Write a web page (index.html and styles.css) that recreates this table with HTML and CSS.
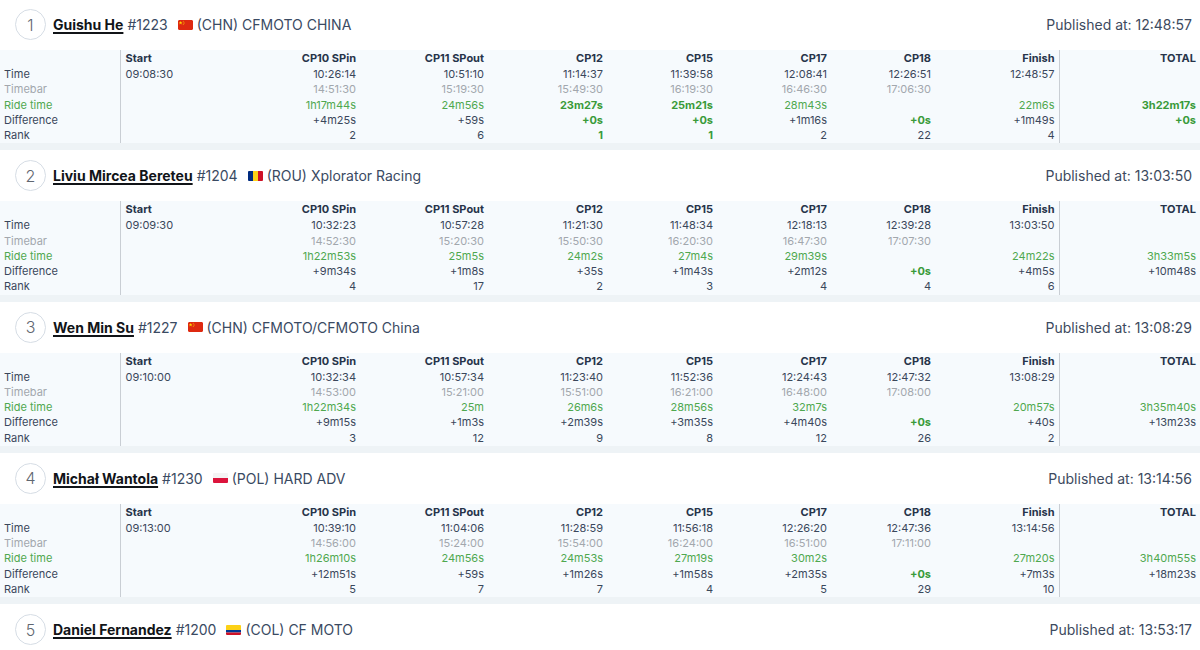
FILE: index.html
```html
<!DOCTYPE html>
<html>
<head>
<meta charset="utf-8">
<link rel="stylesheet" href="styles.css">
</head>
<body>
<div class="list">

<section class="card">
  <div class="card-head">
    <div class="pos">1</div>
    <div class="who">
      <a class="name" href="#">Guishu He</a>
      <span class="num">#1223</span>
      <svg class="flag" viewBox="0 0 15 10"><rect width="15" height="10" rx="1" fill="#de2910"/><polygon points="2.6,1 3.1,2.3 4.4,2.3 3.4,3.1 3.8,4.4 2.6,3.6 1.4,4.4 1.8,3.1 0.8,2.3 2.1,2.3" fill="#ffde00"/><circle cx="5.2" cy="1.2" r="0.45" fill="#ffde00"/><circle cx="6" cy="2.2" r="0.45" fill="#ffde00"/><circle cx="6" cy="3.5" r="0.45" fill="#ffde00"/><circle cx="5.2" cy="4.5" r="0.45" fill="#ffde00"/></svg>
      <span class="team">(CHN) CFMOTO CHINA</span>
    </div>
    <div class="pub">Published at: 12:48:57</div>
  </div>
  <table class="splits">
    <colgroup><col class="c-lab"><col class="c-start"><col class="c-10"><col class="c-11"><col class="c-12"><col class="c-15"><col class="c-17"><col class="c-18"><col class="c-fin"><col class="c-tot"></colgroup>
    <thead><tr><th></th><th class="start">Start</th><th>CP10 SPin</th><th>CP11 SPout</th><th>CP12</th><th>CP15</th><th>CP17</th><th>CP18</th><th>Finish</th><th class="tot">TOTAL</th></tr></thead>
    <tbody>
      <tr class="r-time"><td>Time</td><td class="start">09:08:30</td><td>10:26:14</td><td>10:51:10</td><td>11:14:37</td><td>11:39:58</td><td>12:08:41</td><td>12:26:51</td><td>12:48:57</td><td class="tot"></td></tr>
      <tr class="r-bar"><td>Timebar</td><td class="start"></td><td>14:51:30</td><td>15:19:30</td><td>15:49:30</td><td>16:19:30</td><td>16:46:30</td><td>17:06:30</td><td></td><td class="tot"></td></tr>
      <tr class="r-ride"><td>Ride time</td><td class="start"></td><td>1h17m44s</td><td>24m56s</td><td class="best">23m27s</td><td class="best">25m21s</td><td>28m43s</td><td></td><td>22m6s</td><td class="tot best">3h22m17s</td></tr>
      <tr class="r-diff"><td>Difference</td><td class="start"></td><td>+4m25s</td><td>+59s</td><td class="best">+0s</td><td class="best">+0s</td><td>+1m16s</td><td class="best">+0s</td><td>+1m49s</td><td class="tot best">+0s</td></tr>
      <tr class="r-rank"><td>Rank</td><td class="start"></td><td>2</td><td>6</td><td class="best">1</td><td class="best">1</td><td>2</td><td>22</td><td>4</td><td class="tot"></td></tr>
    </tbody>
  </table>
</section>

<section class="card">
  <div class="card-head">
    <div class="pos">2</div>
    <div class="who">
      <a class="name" href="#">Liviu Mircea Bereteu</a>
      <span class="num">#1204</span>
      <svg class="flag" viewBox="0 0 15 10"><rect width="5" height="10" fill="#002b7f"/><rect x="5" width="5" height="10" fill="#fcd116"/><rect x="10" width="5" height="10" fill="#ce1126"/></svg>
      <span class="team">(ROU) Xplorator Racing</span>
    </div>
    <div class="pub">Published at: 13:03:50</div>
  </div>
  <table class="splits">
    <colgroup><col class="c-lab"><col class="c-start"><col class="c-10"><col class="c-11"><col class="c-12"><col class="c-15"><col class="c-17"><col class="c-18"><col class="c-fin"><col class="c-tot"></colgroup>
    <thead><tr><th></th><th class="start">Start</th><th>CP10 SPin</th><th>CP11 SPout</th><th>CP12</th><th>CP15</th><th>CP17</th><th>CP18</th><th>Finish</th><th class="tot">TOTAL</th></tr></thead>
    <tbody>
      <tr class="r-time"><td>Time</td><td class="start">09:09:30</td><td>10:32:23</td><td>10:57:28</td><td>11:21:30</td><td>11:48:34</td><td>12:18:13</td><td>12:39:28</td><td>13:03:50</td><td class="tot"></td></tr>
      <tr class="r-bar"><td>Timebar</td><td class="start"></td><td>14:52:30</td><td>15:20:30</td><td>15:50:30</td><td>16:20:30</td><td>16:47:30</td><td>17:07:30</td><td></td><td class="tot"></td></tr>
      <tr class="r-ride"><td>Ride time</td><td class="start"></td><td>1h22m53s</td><td>25m5s</td><td>24m2s</td><td>27m4s</td><td>29m39s</td><td></td><td>24m22s</td><td class="tot">3h33m5s</td></tr>
      <tr class="r-diff"><td>Difference</td><td class="start"></td><td>+9m34s</td><td>+1m8s</td><td>+35s</td><td>+1m43s</td><td>+2m12s</td><td class="best">+0s</td><td>+4m5s</td><td class="tot">+10m48s</td></tr>
      <tr class="r-rank"><td>Rank</td><td class="start"></td><td>4</td><td>17</td><td>2</td><td>3</td><td>4</td><td>4</td><td>6</td><td class="tot"></td></tr>
    </tbody>
  </table>
</section>

<section class="card">
  <div class="card-head">
    <div class="pos">3</div>
    <div class="who">
      <a class="name" href="#">Wen Min Su</a>
      <span class="num">#1227</span>
      <svg class="flag" viewBox="0 0 15 10"><rect width="15" height="10" rx="1" fill="#de2910"/><polygon points="2.6,1 3.1,2.3 4.4,2.3 3.4,3.1 3.8,4.4 2.6,3.6 1.4,4.4 1.8,3.1 0.8,2.3 2.1,2.3" fill="#ffde00"/><circle cx="5.2" cy="1.2" r="0.45" fill="#ffde00"/><circle cx="6" cy="2.2" r="0.45" fill="#ffde00"/><circle cx="6" cy="3.5" r="0.45" fill="#ffde00"/><circle cx="5.2" cy="4.5" r="0.45" fill="#ffde00"/></svg>
      <span class="team">(CHN) CFMOTO/CFMOTO China</span>
    </div>
    <div class="pub">Published at: 13:08:29</div>
  </div>
  <table class="splits">
    <colgroup><col class="c-lab"><col class="c-start"><col class="c-10"><col class="c-11"><col class="c-12"><col class="c-15"><col class="c-17"><col class="c-18"><col class="c-fin"><col class="c-tot"></colgroup>
    <thead><tr><th></th><th class="start">Start</th><th>CP10 SPin</th><th>CP11 SPout</th><th>CP12</th><th>CP15</th><th>CP17</th><th>CP18</th><th>Finish</th><th class="tot">TOTAL</th></tr></thead>
    <tbody>
      <tr class="r-time"><td>Time</td><td class="start">09:10:00</td><td>10:32:34</td><td>10:57:34</td><td>11:23:40</td><td>11:52:36</td><td>12:24:43</td><td>12:47:32</td><td>13:08:29</td><td class="tot"></td></tr>
      <tr class="r-bar"><td>Timebar</td><td class="start"></td><td>14:53:00</td><td>15:21:00</td><td>15:51:00</td><td>16:21:00</td><td>16:48:00</td><td>17:08:00</td><td></td><td class="tot"></td></tr>
      <tr class="r-ride"><td>Ride time</td><td class="start"></td><td>1h22m34s</td><td>25m</td><td>26m6s</td><td>28m56s</td><td>32m7s</td><td></td><td>20m57s</td><td class="tot">3h35m40s</td></tr>
      <tr class="r-diff"><td>Difference</td><td class="start"></td><td>+9m15s</td><td>+1m3s</td><td>+2m39s</td><td>+3m35s</td><td>+4m40s</td><td class="best">+0s</td><td>+40s</td><td class="tot">+13m23s</td></tr>
      <tr class="r-rank"><td>Rank</td><td class="start"></td><td>3</td><td>12</td><td>9</td><td>8</td><td>12</td><td>26</td><td>2</td><td class="tot"></td></tr>
    </tbody>
  </table>
</section>

<section class="card">
  <div class="card-head">
    <div class="pos">4</div>
    <div class="who">
      <a class="name" href="#">Michał Wantola</a>
      <span class="num">#1230</span>
      <svg class="flag" viewBox="0 0 15 10"><rect width="15" height="5" fill="#f4f4f4"/><rect y="5" width="15" height="5" fill="#dc143c"/></svg>
      <span class="team">(POL) HARD ADV</span>
    </div>
    <div class="pub">Published at: 13:14:56</div>
  </div>
  <table class="splits">
    <colgroup><col class="c-lab"><col class="c-start"><col class="c-10"><col class="c-11"><col class="c-12"><col class="c-15"><col class="c-17"><col class="c-18"><col class="c-fin"><col class="c-tot"></colgroup>
    <thead><tr><th></th><th class="start">Start</th><th>CP10 SPin</th><th>CP11 SPout</th><th>CP12</th><th>CP15</th><th>CP17</th><th>CP18</th><th>Finish</th><th class="tot">TOTAL</th></tr></thead>
    <tbody>
      <tr class="r-time"><td>Time</td><td class="start">09:13:00</td><td>10:39:10</td><td>11:04:06</td><td>11:28:59</td><td>11:56:18</td><td>12:26:20</td><td>12:47:36</td><td>13:14:56</td><td class="tot"></td></tr>
      <tr class="r-bar"><td>Timebar</td><td class="start"></td><td>14:56:00</td><td>15:24:00</td><td>15:54:00</td><td>16:24:00</td><td>16:51:00</td><td>17:11:00</td><td></td><td class="tot"></td></tr>
      <tr class="r-ride"><td>Ride time</td><td class="start"></td><td>1h26m10s</td><td>24m56s</td><td>24m53s</td><td>27m19s</td><td>30m2s</td><td></td><td>27m20s</td><td class="tot">3h40m55s</td></tr>
      <tr class="r-diff"><td>Difference</td><td class="start"></td><td>+12m51s</td><td>+59s</td><td>+1m26s</td><td>+1m58s</td><td>+2m35s</td><td class="best">+0s</td><td>+7m3s</td><td class="tot">+18m23s</td></tr>
      <tr class="r-rank"><td>Rank</td><td class="start"></td><td>5</td><td>7</td><td>7</td><td>4</td><td>5</td><td>29</td><td>10</td><td class="tot"></td></tr>
    </tbody>
  </table>
</section>

<section class="card">
  <div class="card-head">
    <div class="pos">5</div>
    <div class="who">
      <a class="name" href="#">Daniel Fernandez</a>
      <span class="num">#1200</span>
      <svg class="flag" viewBox="0 0 15 10"><rect width="15" height="5" fill="#fcd116"/><rect y="5" width="15" height="2.5" fill="#003893"/><rect y="7.5" width="15" height="2.5" fill="#ce1126"/></svg>
      <span class="team">(COL) CF MOTO</span>
    </div>
    <div class="pub">Published at: 13:53:17</div>
  </div>
</section>

</div>
</body>
</html>
```

FILE: styles.css
```css
* { box-sizing: border-box; }

body {
  margin: 0;
  background: #ffffff;
  font-family: Inter, "Open Sans", "Liberation Sans", sans-serif;
  color: #3a475b;
}

.list {
  margin-top: -1px;
}

.card {
  border-bottom: 7px solid #eef3f6;
}

.card-head {
  height: 51px;
  display: flex;
  align-items: center;
  padding: 0 8px 0 15px;
}

.pos {
  width: 31px;
  height: 31px;
  border: 1px solid #d6dde5;
  border-radius: 50%;
  display: flex;
  align-items: center;
  justify-content: center;
  font-size: 16px;
  font-weight: 300;
  color: #5f6670;
  flex: none;
}

.who {
  flex: 1;
  display: flex;
  align-items: center;
  margin-left: 7px;
  font-size: 14px;
  color: #3a4a62;
}

.name {
  color: #111418;
  font-weight: 700;
  text-decoration: underline;
  text-decoration-thickness: 1.5px;
  text-underline-offset: 2px;
}

.num {
  margin-left: 4px;
}

.flag {
  width: 15px;
  height: 10px;
  margin-left: 10px;
  margin-right: 4px;
  border-radius: 1px;
}

.pub {
  font-size: 14px;
  color: #3d4a5e;
}

.splits {
  width: 1200px;
  table-layout: fixed;
  border-collapse: collapse;
  background: #f6fafd;
  font-size: 11px;
  color: #3a475b;
}

.c-lab { width: 120px; }
.c-start { width: 120px; }
.c-10 { width: 120px; }
.c-11 { width: 128px; }
.c-12 { width: 119px; }
.c-15 { width: 110px; }
.c-17 { width: 114px; }
.c-18 { width: 104px; }
.c-fin { width: 124px; }
.c-tot { width: 141px; }

.splits th {
  height: 17px;
  padding: 1px 4px 1px 4px;
  text-align: right;
  font-weight: 700;
  color: #26344a;
  line-height: 15px;
  white-space: nowrap;
}

.splits td {
  height: 15.25px;
  padding: 0 4px;
  text-align: right;
  line-height: 15.25px;
  white-space: nowrap;
}

.splits td:first-child {
  text-align: left;
}

.splits .start {
  text-align: left;
  padding-left: 5px;
  border-left: 1.5px solid #c9ced4;
}

.splits .tot {
  border-left: 1.5px solid #c9ced4;
}

.r-bar td { color: #a2a7ad; }
.r-ride td { color: #4fa84f; }
.splits td.best { color: #3a9a3a; font-weight: 700; }
```
